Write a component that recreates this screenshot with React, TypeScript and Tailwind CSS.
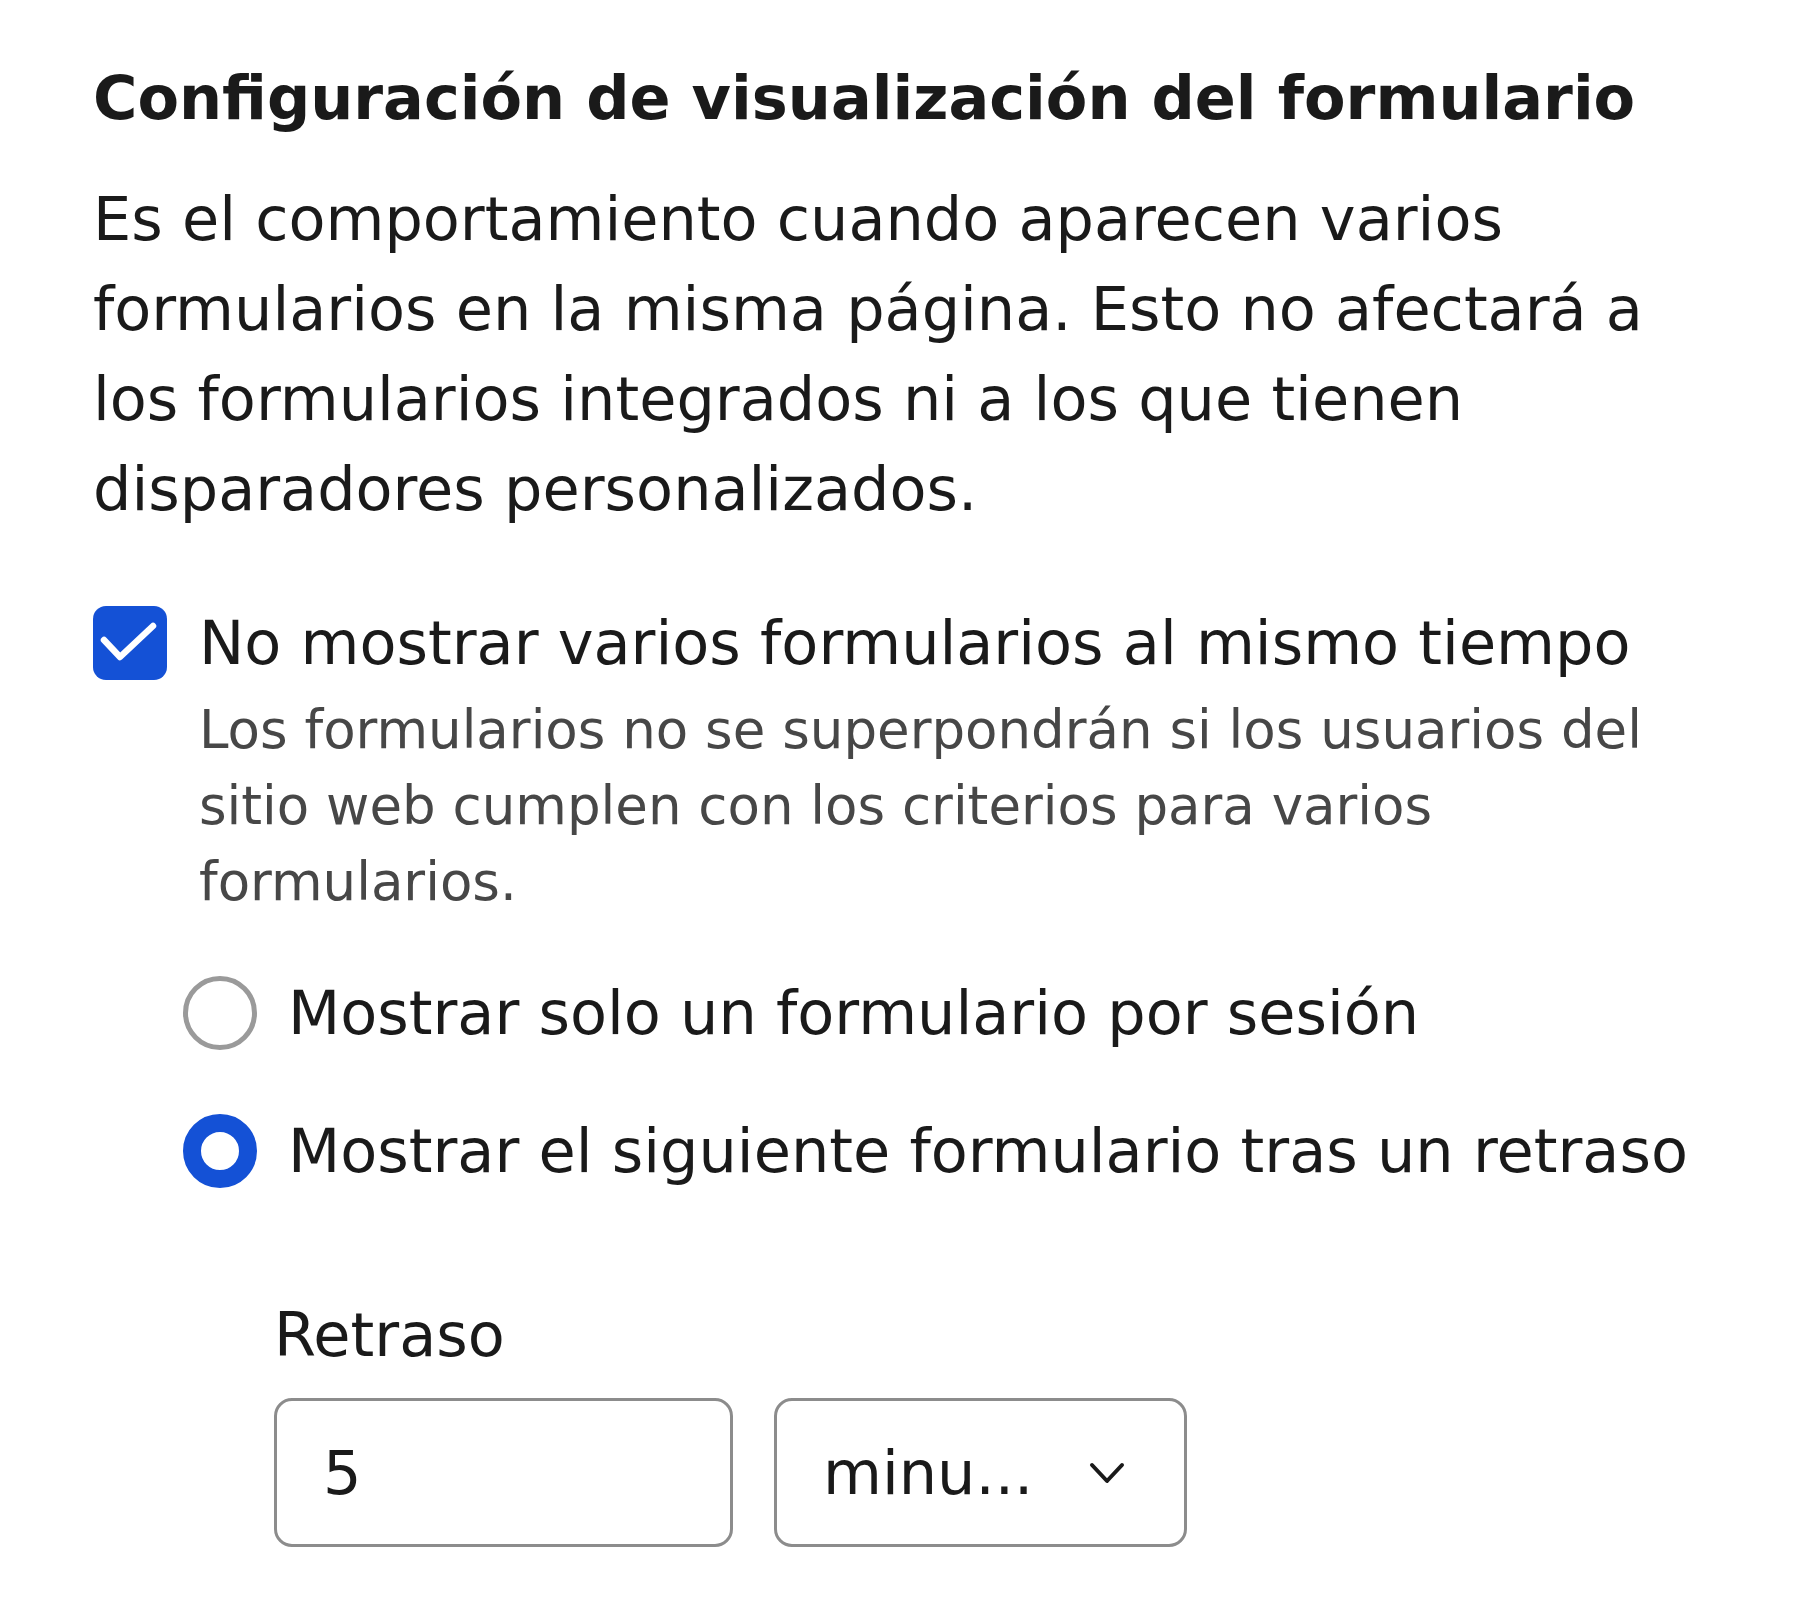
import { useState } from "react";

const font = { fontFamily: '"DejaVu Sans", sans-serif' };

const App = () => {
  const [hideMultiple, setHideMultiple] = useState(true);
  const [mode, setMode] = useState("delay");
  const [delay, setDelay] = useState("5");

  return (
    <div style={font} className="min-h-screen bg-white pl-[93px] pr-[100px] pt-[61px] text-[#1a1a1a]">
      <h2 className="text-[60.5px] leading-[75px] font-bold text-[#1a1a1a]">
        Configuración de visualización del formulario
      </h2>
      <p className="mt-[38px] text-[60.5px] leading-[90px]">
        Es el comportamiento cuando aparecen varios formularios en la misma página. Esto no afectará a los
        formularios integrados ni a los que tienen disparadores personalizados.
      </p>

      {/* checkbox */}
      <div className="mt-[64px] flex gap-[32px]">
        <button
          onClick={() => setHideMultiple(!hideMultiple)}
          className={
            hideMultiple
              ? "mt-[8px] flex h-[74px] w-[74px] shrink-0 items-center justify-center rounded-[13px] bg-[#1451d6]"
              : "mt-[8px] flex h-[74px] w-[74px] shrink-0 items-center justify-center rounded-[13px] border-[5px] border-[#999999] bg-white"
          }
        >
          {hideMultiple && (
            <svg width="74" height="74" viewBox="0 0 74 74" fill="none">
              <path d="M11 34 L27 51 L60 20" stroke="white" strokeWidth="6.5" strokeLinecap="round" strokeLinejoin="round" />
            </svg>
          )}
        </button>
        <div>
          <div className="text-[60.5px] leading-[90px]">No mostrar varios formularios al mismo tiempo</div>
          <div className="mt-[4px] text-[53px] leading-[76px] text-[#474747]">
            Los formularios no se superpondrán si los usuarios del sitio web cumplen con los criterios para varios
            formularios.
          </div>
        </div>
      </div>

      {/* radios */}
      <div className="mt-[48px] flex flex-col gap-[48px] pl-[90px]">
        <label className="flex cursor-pointer items-center gap-[31px]" onClick={() => setMode("single")}>
          {mode === "single" ? (
            <span className="h-[74px] w-[74px] shrink-0 rounded-full border-[18px] border-[#1451d6] bg-white" />
          ) : (
            <span className="h-[74px] w-[74px] shrink-0 rounded-full border-[5px] border-[#9a9a9a] bg-white" />
          )}
          <span className="text-[60.5px] leading-[90px]">Mostrar solo un formulario por sesión</span>
        </label>
        <label className="flex cursor-pointer items-center gap-[31px]" onClick={() => setMode("delay")}>
          {mode === "delay" ? (
            <span className="h-[74px] w-[74px] shrink-0 rounded-full border-[18px] border-[#1451d6] bg-white" />
          ) : (
            <span className="h-[74px] w-[74px] shrink-0 rounded-full border-[5px] border-[#9a9a9a] bg-white" />
          )}
          <span className="text-[60.5px] leading-[90px] whitespace-nowrap">Mostrar el siguiente formulario tras un retraso</span>
        </label>
      </div>

      {/* delay */}
      <div className="mt-[94px] pl-[181px]">
        <div className="text-[60.5px] leading-[90px]">Retraso</div>
        <div className="mt-[18px] flex gap-[41px]">
          <input
            value={delay}
            onChange={(e) => setDelay(e.target.value)}
            style={font}
            className="h-[149px] w-[459px] rounded-[18px] border-[3px] border-[#8c8c8c] bg-white px-[46px] text-[60.5px] text-[#1a1a1a] outline-none"
          />
          <div className="flex h-[149px] w-[413px] items-center justify-between rounded-[18px] border-[3px] border-[#8c8c8c] bg-white pl-[46px] pr-[59px]">
            <span className="text-[60.5px] leading-[90px]">minu...</span>
            <svg width="36" height="26" viewBox="0 0 36 26" fill="none">
              <path d="M3 5 L18 21 L33 5" stroke="#1a1a1a" strokeWidth="4" strokeLinecap="round" strokeLinejoin="round" />
            </svg>
          </div>
        </div>
      </div>
    </div>
  );
};

export default App;
